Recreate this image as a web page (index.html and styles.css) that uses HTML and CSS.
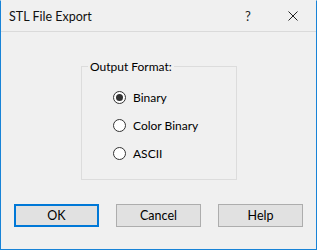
FILE: index.html
```html
<!DOCTYPE html>
<html lang="en">
<head>
    <meta charset="UTF-8">
    <title>STL File Export</title>
    <link rel="stylesheet" href="styles.css">
</head>
<body>
    <div class="window">
        <div class="titlebar">
            <span class="title">STL File Export</span>
            <span class="title_btn help_btn">?</span>
            <span class="title_btn close_btn">
                <svg width="10" height="10" viewBox="0 0 10 10">
                    <path d="M0.5 0.5 L9.5 9.5 M9.5 0.5 L0.5 9.5" stroke="#222" stroke-width="1" fill="none"/>
                </svg>
            </span>
        </div>
        <div class="content">
            <div class="group">
                <span class="legend">Output Format:</span>
                <div class="options">
                    <label class="radio checked"><span class="dot"></span>Binary</label>
                    <label class="radio"><span class="dot"></span>Color Binary</label>
                    <label class="radio"><span class="dot"></span>ASCII</label>
                </div>
            </div>
            <div class="buttons">
                <button class="btn default">OK</button>
                <button class="btn">Cancel</button>
                <button class="btn">Help</button>
            </div>
        </div>
    </div>
</body>
</html>
```
FILE: styles.css
```css
* {
    box-sizing: border-box;
    margin: 0;
    padding: 0;
}
body {
    width: 317px;
    height: 250px;
    background: #f0f0f0;
    font-family: Lato, "Noto Sans", sans-serif;
    font-size: 12px;
    color: #000;
}

/* Window */
.window {
    width: 317px;
    height: 250px;
    border: 1px solid #1883d7;
    border-top-color: #f0f0f0;
    display: flex;
    flex-direction: column;
}
.titlebar {
    height: 31px;
    display: flex;
    align-items: center;
    border-bottom: 1px solid #dadada;
    padding-left: 8px;
}
.titlebar .title {
    flex: 1;
    font-size: 12.5px;
    color: #111;
}
.titlebar .title_btn {
    width: 46px;
    height: 30px;
    display: flex;
    align-items: center;
    justify-content: center;
    font-size: 13px;
    color: #222;
}
.titlebar .help_btn {
    width: 44px;
}

/* Group box */
.content {
    flex: 1;
    display: flex;
    flex-direction: column;
}
.group {
    margin: 34px 0 0 80px;
    width: 156px;
    height: 114px;
    border: 1px solid #dcdcdc;
}
.group .legend {
    display: block;
    width: fit-content;
    margin: -8px 0 0 6px;
    padding: 0 2px;
    line-height: 15px;
    background: #f0f0f0;
}
.options {
    margin-top: 14px;
    padding-left: 31px;
    display: flex;
    flex-direction: column;
    gap: 10px;
}
.radio {
    display: flex;
    align-items: center;
    height: 18px;
    gap: 7px;
}
.radio .dot {
    width: 13px;
    height: 13px;
    border: 1px solid #333;
    border-radius: 50%;
    background: #fff;
    display: flex;
    align-items: center;
    justify-content: center;
}
.radio.checked .dot::after {
    content: "";
    width: 7px;
    height: 7px;
    border-radius: 50%;
    background: #333;
}

/* Buttons */
.buttons {
    margin-top: 24px;
    display: flex;
    gap: 17px;
    padding-left: 13px;
}
.btn {
    width: 85px;
    height: 23px;
    background: #e1e1e1;
    border: 1px solid #adadad;
    font-family: inherit;
    font-size: 12.5px;
    color: #000;
}
.btn.default {
    border: 2px solid #0078d7;
}
```
